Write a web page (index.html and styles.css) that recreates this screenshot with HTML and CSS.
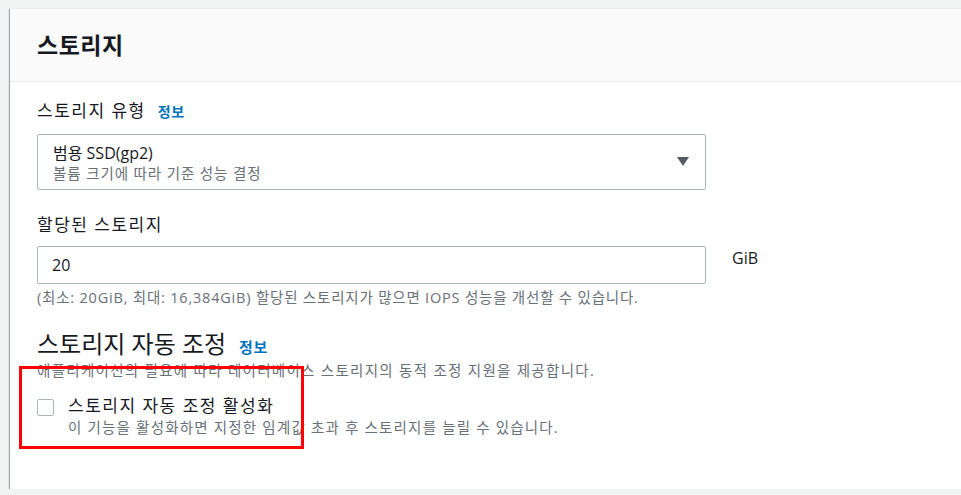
FILE: index.html
```html
<!DOCTYPE html>
<html lang="ko">
<head>
<meta charset="utf-8">
<title>스토리지</title>
<link rel="stylesheet" href="styles.css">
</head>
<body>
<div class="card">
  <div class="card-header">
    <h2 class="card-title">스토리지</h2>
  </div>
  <div class="card-body">
    <div class="field">
      <div class="label"><span class="label-text">스토리지 유형</span><a class="info">정보</a></div>
      <div class="select">
        <div class="select-text">
          <div class="select-main">범용 SSD(gp2)</div>
          <div class="select-sub">볼륨 크기에 따라 기준 성능 결정</div>
        </div>
        <svg class="caret" width="12" height="9" viewBox="0 0 12 9"><path d="M0 0H12L6 9Z" fill="#545b64"/></svg>
      </div>
    </div>
    <div class="field field-2">
      <div class="label"><span class="label-text">할당된 스토리지</span></div>
      <div class="input-row">
        <div class="input">20</div>
        <div class="unit">GiB</div>
      </div>
      <div class="hint">(최소: 20GiB, 최대: 16,384GiB) 할당된 스토리지가 많으면 IOPS 성능을 개선할 수 있습니다.</div>
    </div>
    <div class="section">
      <div class="section-title"><span class="section-text">스토리지 자동 조정</span><a class="info">정보</a></div>
      <div class="section-desc">애플리케이션의 필요에 따라 데이터베이스 스토리지의 동적 조정 지원을 제공합니다.</div>
      <div class="check-row">
        <span class="checkbox"></span>
        <div class="check-text">
          <div class="check-label">스토리지 자동 조정 활성화</div>
          <div class="check-sub">이 기능을 활성화하면 지정한 임계값 초과 후 스토리지를 늘릴 수 있습니다.</div>
        </div>
      </div>
    </div>
    <div class="highlight"></div>
  </div>
</div>
</body>
</html>
```

FILE: styles.css
```css
html, body {
  margin: 0;
  padding: 0;
  background: #f2f3f3;
  overflow: hidden;
}
body {
  padding: 8px 0 0 10px;
  font-family: "Open Sans", "Noto Sans CJK KR", sans-serif;
  color: #16191f;
  width: 1100px;
}
.card {
  width: 1000px;
  background: #fff;
  box-shadow: 0 1px 1px 0 rgba(0, 28, 36, 0.5), 1px 1px 1px 0 rgba(0, 28, 36, 0.15), -1px 1px 1px 0 rgba(0, 28, 36, 0.3);
  border-top: 1px solid #eaeded;
}
.card-header {
  background: #fafafa;
  border-bottom: 1px solid #eaeded;
  height: 72px;
  display: flex;
  align-items: center;
  padding-left: 27px;
}
.card-title {
  margin: 0;
  font-size: 23px;
  font-weight: 700;
  line-height: 28px;
  letter-spacing: 0.5px;
}
.card-body {
  position: relative;
  padding: 17px 27px 51px;
}
.label {
  font-size: 17px;
  line-height: 24px;
}
.label-text {
  letter-spacing: 1.5px;
}
.info {
  color: #0073bb;
  font-size: 14px;
  font-weight: 700;
  margin-left: 12px;
  letter-spacing: 0.5px;
}
.select {
  margin-top: 10px;
  width: 669px;
  height: 56px;
  box-sizing: border-box;
  border: 1px solid #aab7b8;
  border-radius: 2px;
  padding: 7px 16px 0 15px;
  display: flex;
  align-items: flex-start;
  justify-content: space-between;
}
.select-main {
  font-size: 16px;
  line-height: 22px;
}
.select-sub {
  font-size: 14.5px;
  line-height: 20px;
  color: #687078;
  letter-spacing: 0.9px;
}
.caret {
  margin-top: 15px;
}
.field-2 {
  margin-top: 23px;
}
.input-row {
  margin-top: 9px;
  display: flex;
  align-items: flex-start;
}
.input {
  width: 669px;
  height: 38px;
  box-sizing: border-box;
  border: 1px solid #aab7b8;
  border-radius: 2px;
  padding-left: 14px;
  font-size: 16px;
  line-height: 36px;
}
.unit {
  margin-left: 26px;
  font-size: 16px;
  line-height: 24px;
}
.hint {
  margin-top: 4px;
  font-size: 14.5px;
  line-height: 20px;
  color: #687078;
  letter-spacing: 0.8px;
}
.section {
  margin-top: 22px;
}
.section-title {
  font-size: 24px;
  line-height: 28px;
}
.section-title .info {
  font-size: 15px;
  margin-left: 13px;
}
.section-desc {
  font-size: 14.5px;
  line-height: 20px;
  color: #687078;
  letter-spacing: 1.3px;
}
.check-row {
  margin-top: 13px;
  display: flex;
  align-items: flex-start;
}
.checkbox {
  width: 17px;
  height: 17px;
  box-sizing: border-box;
  border: 1px solid #aab7b8;
  border-radius: 2px;
  margin-top: 5px;
  margin-right: 14px;
  flex: none;
}
.check-label {
  font-size: 17px;
  line-height: 24px;
  letter-spacing: 1.5px;
}
.check-sub {
  font-size: 14.5px;
  line-height: 20px;
  color: #687078;
  letter-spacing: 1.2px;
}
.highlight {
  position: absolute;
  left: 9px;
  top: 284px;
  width: 279px;
  height: 77px;
  border: 3px solid #ff0000;
}
```
